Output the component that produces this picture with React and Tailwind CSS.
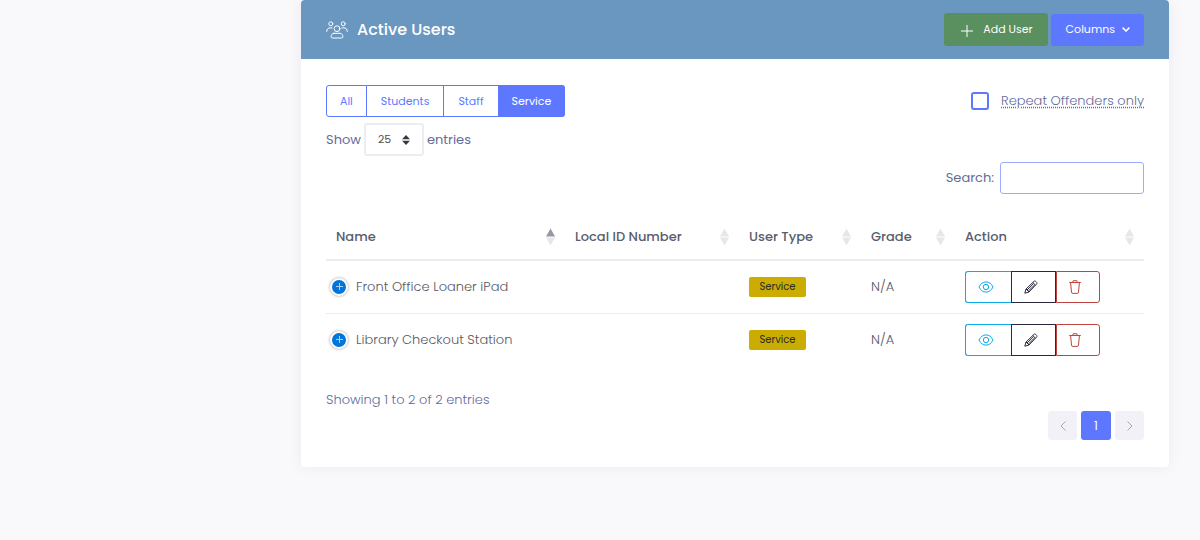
import React from 'react';

const COLUMNS = [
  { label: 'Name', width: 'w-[239px]', sorted: true },
  { label: 'Local ID Number', width: 'w-[174px]' },
  { label: 'User Type', width: 'w-[122px]' },
  { label: 'Grade', width: 'w-[94px]' },
  { label: 'Action', width: 'w-[189px]' },
];

const USERS = [
  { name: 'Front Office Loaner iPad', localId: '', type: 'Service', grade: 'N/A' },
  { name: 'Library Checkout Station', localId: '', type: 'Service', grade: 'N/A' },
];

const FILTERS = ['All', 'Students', 'Staff', 'Service'];

function UsersIcon() {
  return (
    <svg className="h-[18px] w-[22px]" viewBox="0 0 22 18" fill="none" stroke="#fff" strokeLinecap="round" aria-hidden="true">
      <circle cx="4.8" cy="2.8" r="2" />
      <circle cx="17.2" cy="2.8" r="2" />
      <circle cx="11" cy="7.7" r="2.900" />
      <path d="M.7 10.400C.7 8 2.200 6.900 4.200 6.900h1.800M21.300 10.400c0-2.400-1.500-3.500-3.500-3.500h-1.800" />
      <path d="M8 12.300h6c1.900 0 2.900 1.700 2.900 3.500 0 .8-.4 1.200-1.200 1.200H6.300c-.8 0-1.200-.4-1.200-1.200 0-1.800 1-3.500 2.900-3.500z" />
    </svg>
  );
}

function EyeIcon() {
  return (
    <svg className="h-3 w-4" viewBox="0 0 16 12" fill="none" stroke="currentColor" aria-hidden="true">
      <path d="M1 6C2.600 2.600 5 .9 8 .9S13.400 2.600 15 6c-1.600 3.400-4 5.100-7 5.100S2.600 9.400 1 6z" />
      <circle cx="8" cy="6" r="2.700" />
    </svg>
  );
}

function PencilIcon() {
  return (
    <svg className="h-[14px] w-[14px]" viewBox="0 0 14 14" fill="none" stroke="currentColor" strokeLinejoin="round" aria-hidden="true">
      <path d="M.8 13.200l1.200-4.200 8-7.600c.5-.5 1.200-.5 1.700 0l.9.900c.5.5.5 1.200 0 1.700L5 12z" />
      <path d="M2 9l3 3M8.800 2.500l2.700 2.700M3 10l6.500-6.300M4.200 11.200l6.500-6.300" />
    </svg>
  );
}

function TrashIcon() {
  return (
    <svg className="h-[14px] w-3" viewBox="0 0 12 14" fill="none" stroke="currentColor" strokeLinecap="round" strokeLinejoin="round" aria-hidden="true">
      <path d="M.6 2.500h10.800M3.700 2.300l.5-1.600h3.600l.5 1.600M1.600 2.700l.9 9.300c.1.900.5 1.400 1.300 1.400h4.400c.8 0 1.200-.5 1.300-1.400l.9-9.300" />
    </svg>
  );
}

function SortIcon({ sorted }) {
  return (
    <svg className="h-[18px] w-[9px] shrink-0" viewBox="0 0 9 18" aria-hidden="true">
      <path d="M4.500.5L9 8.500H0z" fill={sorted ? '#9698a6' : '#e6e7ea'} />
      <path d="M4.500 17.500L0 9.500h9z" fill="#e6e7ea" />
    </svg>
  );
}

function CardHeader() {
  return (
    <header className="flex h-[59px] items-center justify-between rounded-t bg-[#6a97c0] px-[25px]">
      <div className="flex items-center gap-[9px]">
        <UsersIcon />
        <h1 className="text-base font-medium text-white">Active Users</h1>
      </div>
      <div className="flex items-center gap-[3px] text-[11px] text-white">
        <button type="button" className="flex h-[33px] items-center gap-2.5 rounded-[3px] bg-[#5a8f60] pr-[15px] pl-[17px]">
          <svg className="mt-0.5 h-3 w-3" viewBox="0 0 12 12" stroke="#fff" aria-hidden="true">
            <path d="M6 0v12M0 6h12" />
          </svg>
          Add User
        </button>
        <button type="button" className="flex h-8 items-center gap-[7px] rounded-[3px] bg-[#5d78ff] pr-3.5 pl-[15px]">
          Columns
          <svg className="h-[5px] w-2" viewBox="0 0 8 5" fill="none" stroke="#fff" strokeWidth="1.500" aria-hidden="true">
            <path d="M.6.600L4 4 7.400.600" />
          </svg>
        </button>
      </div>
    </header>
  );
}

function Controls() {
  return (
    <>
      <div className="flex items-center justify-between">
        <div className="flex h-8 text-[11px] text-[#5d78ff]">
          {FILTERS.map((f) => (
            <button
              key={f}
              type="button"
              className={
                f === 'Service'
                  ? 'rounded-r-[3px] border border-l-0 border-[#5d78ff] bg-[#5d78ff] px-[13px] text-white'
                  : 'border border-l-0 border-[#5d78ff] px-3.5 first:rounded-l-[3px] first:border-l first:px-[13px]'
              }
            >
              {f}
            </button>
          ))}
        </div>
        <label className="flex items-center gap-3 text-[13px] font-light text-[#646c9a]">
          <input type="checkbox" className="h-[18px] w-[18px] appearance-none rounded-[3px] border-2 border-[#5d78ff]" />
          <span className="underline decoration-dotted underline-offset-2">Repeat Offenders only</span>
        </label>
      </div>
      <label className="mt-1.5 flex h-[33px] items-center gap-[3px] text-[13px] text-[#646c9a]">
        Show
        <span className="relative flex">
          <select defaultValue="25" className="h-[33px] w-[60px] appearance-none rounded-[3px] border-2 border-[#ebedf2] bg-white pl-3 text-[11px] text-[#495057]">
            <option>10</option>
            <option>25</option>
            <option>50</option>
          </select>
          <svg className="pointer-events-none absolute top-3 right-3.5 h-[10px] w-2" viewBox="0 0 8 10" fill="#343a40" aria-hidden="true">
            <path d="M4 0l4 4.200H0zM4 10L0 5.800h8z" />
          </svg>
        </span>
        entries
      </label>
      <label className="mt-1.5 flex items-center justify-end gap-1.5 text-[13px] text-[#646c9a]">
        Search:
        <input type="search" className="h-8 w-36 rounded-[3px] border border-[#9aabff] px-3 text-[11px] outline-none" />
      </label>
    </>
  );
}

function UserRow({ user }) {
  return (
    <tr className="h-[53px] border-b border-[#ebedf2] last:border-b-0">
      <td className="pl-1">
        <div className="flex items-center gap-2">
          <button type="button" aria-label="Show details" className="flex h-[18px] w-[18px] items-center justify-center rounded-full border-2 border-white bg-[#0275d8] shadow-[0_0_3px_#999]">
            <svg className="h-[7px] w-[7px]" viewBox="0 0 7 7" stroke="#a9d0f3" aria-hidden="true">
              <path d="M3.500 0v7M0 3.500h7" />
            </svg>
          </button>
          {user.name}
        </div>
      </td>
      <td className="px-2.5">{user.localId}</td>
      <td className="px-2.5">
        <span className="flex h-5 w-[57px] items-center justify-center rounded-[2px] bg-[#cbac00] text-[10px] font-normal text-[#2b2b2b]">{user.type}</span>
      </td>
      <td className="px-2.5">{user.grade}</td>
      <td className="px-2.5">
        <div className="flex h-8">
          <button type="button" aria-label="View" className="flex w-[46px] items-center rounded-l-[3px] border border-r-0 border-[#0dabe8] pl-3 text-[#0dabe8]">
            <EyeIcon />
          </button>
          <button type="button" aria-label="Edit" className="flex w-[45px] items-center border border-[#282a3c] pl-3 text-[#282a3c]">
            <PencilIcon />
          </button>
          <button type="button" aria-label="Delete" className="flex w-11 items-center rounded-r-[3px] border border-[#c0443f] pl-3 text-[#c0443f]">
            <TrashIcon />
          </button>
        </div>
      </td>
    </tr>
  );
}

function UsersTable() {
  return (
    <table className="mt-[18px] w-full table-fixed border-collapse text-left text-[13px] font-light text-[#575962]">
      <thead>
        <tr className="h-12 border-b-2 border-[#ebedf2]">
          {COLUMNS.map((c) => (
            <th key={c.label} className={`${c.width} px-2.5 pt-0.5 font-medium text-[#595d6e]`}>
              <div className="flex items-center justify-between whitespace-nowrap">
                {c.label}
                <SortIcon sorted={c.sorted} />
              </div>
            </th>
          ))}
        </tr>
      </thead>
      <tbody>
        {USERS.map((u) => (
          <UserRow key={u.name} user={u} />
        ))}
      </tbody>
    </table>
  );
}

function Pagination() {
  return (
    <nav className="mt-px flex justify-end gap-1 text-xs text-[#a3a6b4]" aria-label="Pages">
      <button type="button" aria-label="Previous" className="flex h-[29px] w-[29px] items-center justify-center rounded-[3px] bg-[#f2f1f7]">
        <svg className="h-2.5 w-1.5" viewBox="0 0 6 10" fill="none" stroke="currentColor" aria-hidden="true">
          <path d="M5.500.500L1 5l4.500 4.500" />
        </svg>
      </button>
      <button type="button" className="h-[29px] w-[30px] rounded-[3px] bg-[#5d78ff] text-white">1</button>
      <button type="button" aria-label="Next" className="flex h-[29px] w-[29px] items-center justify-center rounded-[3px] bg-[#f2f1f7]">
        <svg className="h-2.5 w-1.5" viewBox="0 0 6 10" fill="none" stroke="currentColor" aria-hidden="true">
          <path d="M.5.500L5 5 .5 9.500" />
        </svg>
      </button>
    </nav>
  );
}

export default function App() {
  return (
    <div className="min-h-screen bg-[#f9f9fc] pr-[31px] pl-[301px] font-['Poppins','Inter',sans-serif]">
      <main className="rounded bg-white shadow-[0_0_14px_0_rgba(82,63,105,0.08)]">
        <CardHeader />
        <div className="px-[25px] pt-[26px] pb-[27px]">
          <Controls />
          <UsersTable />
          <p className="mt-6 text-[13px] leading-5 font-light text-[#646c9a]">Showing 1 to 2 of 2 entries</p>
          <Pagination />
        </div>
      </main>
    </div>
  );
}
